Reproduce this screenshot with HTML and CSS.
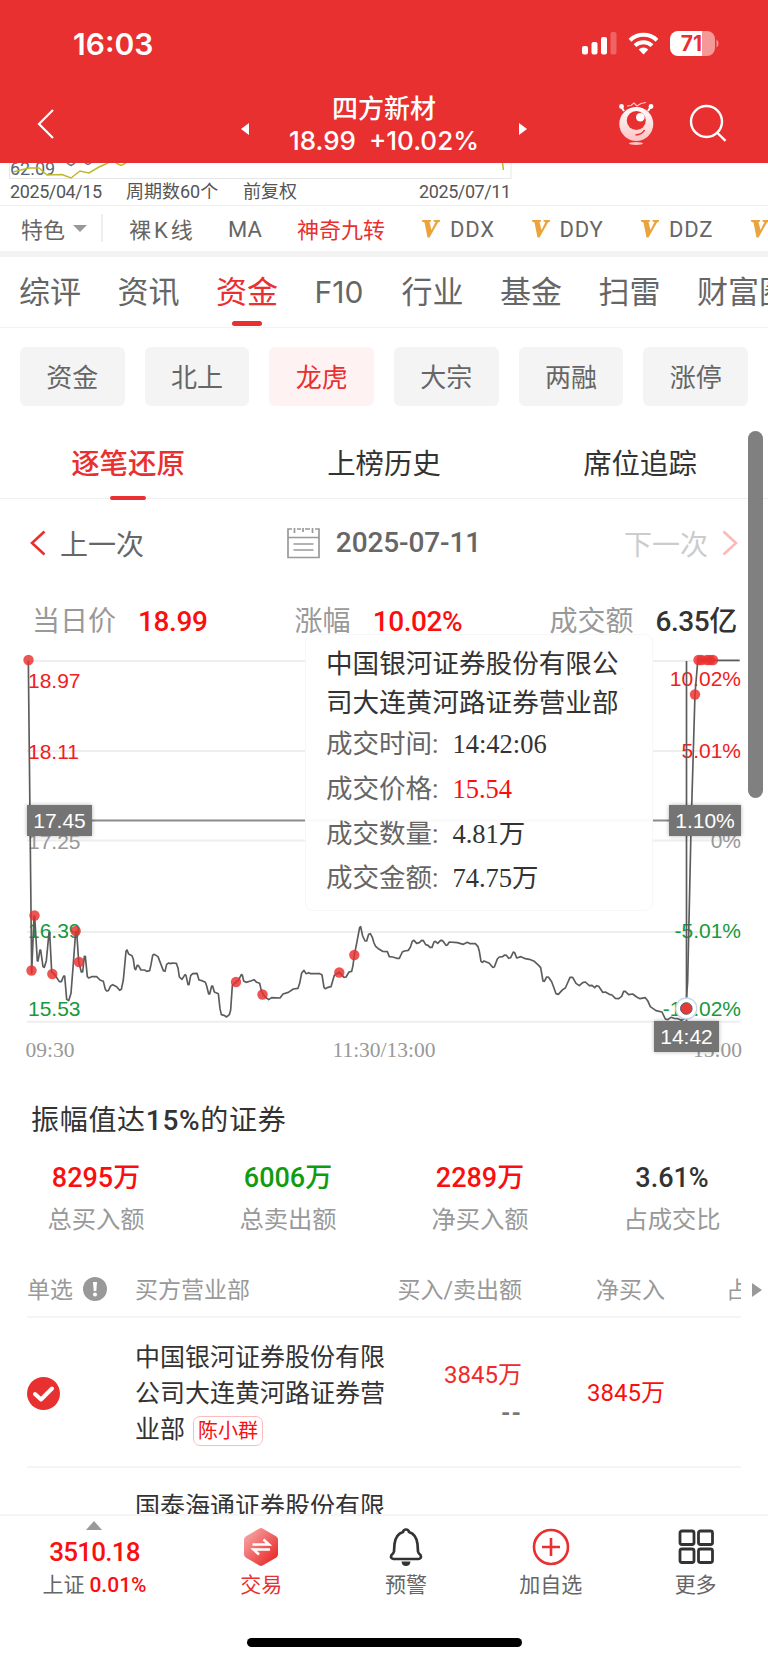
FILE: index.html
```html
<!DOCTYPE html>
<html lang="zh-CN">
<head>
    <meta charset="UTF-8">
    <meta name="viewport" content="width=device-width, initial-scale=1.0">
    <title>四方新材</title>
    <link rel="stylesheet" href="styles.css">
</head>
<body>
    <!-- Header -->
    <header class="header">
        <div class="status-bar">
            <span class="clock">16:03</span>
            <svg class="status-icons" width="140" height="28" viewBox="580 30 140 28">
                <g fill="#fff">
                    <rect x="582" y="46" width="6" height="8.500" rx="2"/>
                    <rect x="591.500" y="42" width="6" height="12.500" rx="2"/>
                    <rect x="601" y="37" width="6" height="17.500" rx="2"/>
                    <rect x="610.500" y="32" width="6" height="22.500" rx="2" opacity=".25"/>
                    <path d="M643.500 54.500l-4.800-5a7 7 0 0 1 9.600 0z"/>
                </g>
                <g fill="none" stroke="#fff" stroke-width="4">
                    <path d="M630 40.200a19.500 19.500 0 0 1 27 0"/>
                    <path d="M635 45.600a12.500 12.500 0 0 1 17 0"/>
                </g>
                <path d="M678 31h24v25h-24a8 8 0 0 1-8-8v-9a8 8 0 0 1 8-8z" fill="#fff"/>
                <path d="M702 31h5a8 8 0 0 1 8 8v9a8 8 0 0 1-8 8h-5z" fill="#fff" opacity=".5"/>
                <path d="M716.500 39.500a5 5 0 0 1 0 8z" fill="#fff" opacity=".5"/>
                <text class="battery-text" x="691.500" y="51">71</text>
            </svg>
        </div>
        <div class="title-bar">
            <svg class="back" width="20" height="32" viewBox="0 0 20 32"><path d="M17 2L3 16l14 14" fill="none" stroke="#fff" stroke-width="2.200"/></svg>
            <svg class="arrow" width="8" height="12" viewBox="0 0 8 12"><path d="M8 0v12L0 6z" fill="#fff"/></svg>
            <div class="stock">
                <div class="stock-name">四方新材</div>
                <div class="stock-price"><span>18.99</span><span>+10.02%</span></div>
            </div>
            <svg class="arrow" width="8" height="12" viewBox="0 0 8 12"><path d="M0 0v12l8-6z" fill="#fff"/></svg>
            <svg class="robot" width="36" height="46" viewBox="618 100 36 46">
                <defs>
                    <linearGradient id="robotFill" x1="0" y1="0" x2="0" y2="1"><stop offset="0" stop-color="#fff"/><stop offset="1" stop-color="#fcc3c3"/></linearGradient>
                </defs>
                <path d="M624 111l-2.500-4M648 111l2.500-4" stroke="#fff" stroke-width="2"/>
                <circle cx="621.500" cy="106.500" r="2.400" fill="#fff"/>
                <circle cx="651" cy="106.500" r="2.400" fill="#fff"/>
                <path d="M627 106l4-.500 3-2.500 3 3 4-2.500 5-1" fill="none" stroke="#ffc9c9" stroke-width="1.200"/>
                <circle cx="636.300" cy="124" r="17" fill="url(#robotFill)"/>
                <circle cx="636.300" cy="120.500" r="9.500" fill="#e93030"/>
                <circle cx="640.300" cy="117.300" r="4.300" fill="#fff"/>
                <path d="M635.500 135q7-.500 9-5" fill="none" stroke="#e93030" stroke-width="1.500"/>
                <ellipse cx="636" cy="143.500" rx="7" ry="1.500" fill="#ffc4c4"/>
            </svg>
            <svg class="search" width="40" height="40" viewBox="688 103 40 40" fill="none" stroke="#fff" stroke-width="2.400"><circle cx="706.500" cy="121.500" r="15.500"/><path d="M717 132.500l8.500 8.300"/></svg>
        </div>
    </header>

    <!-- K line remains and indicator bar -->
    <div class="kline">
        <svg class="kline-svg" width="768" height="16" viewBox="0 163 768 16">
            <path d="M9.500 163v15.500h501.500V163" fill="none" stroke="#e6e6e6"/>
            <text class="low-price" x="10" y="174.500">62.09</text>
            <path d="M13 172l16-4 10 0 8 7 15-.500 9 3.500 9-7 9 2 10-6 9-4M116 163l5 2.500 5-2.500M502.500 163l1 7" fill="none" stroke="#c0b92a" stroke-width="1.500"/>
            <path d="M67 163l4 2.500 4-2.500M85 163l3 1.500 3-1.500" fill="none" stroke="#6b7a8a" stroke-width="1.500"/>
        </svg>
        <div class="kline-dates">
            <span class="day">2025/04/15</span><span class="period">周期数60个</span><span>前复权</span><span class="day end-date">2025/07/11</span>
        </div>
    </div>
    <div class="indicators">
        <span class="feature">特色<i class="caret"></i></span>
        <span class="ind ind-k">裸 K 线</span>
        <span class="ind ind-ma">MA</span>
        <span class="ind ind-on">神奇九转</span>
        <span class="vip"><svg width="18" height="18" viewBox="0 0 18 18"><path d="M0 0h9v1.500l-1.500.500 2 8L13.500 2 11.500 1.500V0H18v1.500L16 2.500 7.500 17.500h-2L2.500 2.500 0 1.500z" fill="#eba43c"/></svg>DDX</span>
        <span class="vip"><svg width="18" height="18" viewBox="0 0 18 18"><path d="M0 0h9v1.500l-1.500.500 2 8L13.500 2 11.500 1.500V0H18v1.500L16 2.500 7.500 17.500h-2L2.500 2.500 0 1.500z" fill="#eba43c"/></svg>DDY</span>
        <span class="vip"><svg width="18" height="18" viewBox="0 0 18 18"><path d="M0 0h9v1.500l-1.500.500 2 8L13.500 2 11.500 1.500V0H18v1.500L16 2.500 7.500 17.500h-2L2.500 2.500 0 1.500z" fill="#eba43c"/></svg>DDZ</span>
        <span class="vip"><svg width="18" height="18" viewBox="0 0 18 18"><path d="M0 0h9v1.500l-1.500.500 2 8L13.500 2 11.500 1.500V0H18v1.500L16 2.500 7.500 17.500h-2L2.500 2.500 0 1.500z" fill="#eba43c"/></svg></span>
    </div>

    <!-- Tabs -->
    <nav class="main-tabs">
        <span>综评</span><span>资讯</span><span class="active">资金</span><span class="latin">F10</span><span>行业</span><span>基金</span><span>扫雷</span><span>财富圈</span>
    </nav>
    <div class="pills">
        <span>资金</span><span>北上</span><span class="active">龙虎</span><span>大宗</span><span>两融</span><span>涨停</span>
    </div>
    <div class="content">
        <div class="sub-tabs">
            <span class="active">逐笔还原</span><span>上榜历史</span><span>席位追踪</span>
        </div>

        <!-- Date switch -->
        <div class="date-row">
            <span class="prev"><svg width="16" height="26" viewBox="0 0 16 26"><path d="M14.500 1.500L2 13l12.500 11.500" fill="none" stroke="#e93030" stroke-width="2.600"/></svg>上一次</span>
            <span class="date">
                <svg width="33" height="32" viewBox="0 0 33 32" fill="none" stroke="#999" stroke-width="1.700"><path d="M5 2H1v28.500h31V2h-4M10 2h4M18 2h5M1 10.500h31M7.500 1v5M16 1v4M25.500 1v5M6.500 17h20M6.500 23h20"/></svg>
                2025-07-11
            </span>
            <span class="next">下一次<svg width="16" height="26" viewBox="0 0 16 26"><path d="M1.500 1.500L14 13 1.500 24.500" fill="none" stroke="#fbb9b9" stroke-width="2.600"/></svg></span>
        </div>
        <div class="quote-row">
            <span>当日价<b class="red">18.99</b></span>
            <span>涨幅<b class="red">10.02%</b></span>
            <span>成交额<b>6.35亿</b></span>
        </div>

        <!-- Chart -->
        <div class="chart">
            <svg width="768" height="430" viewBox="0 645 768 430">
                <g stroke="#eee" stroke-width="2">
                    <path d="M27 661h713M27 751h713M27 840.500h713M27 932h713M27 1021.700h713"/>
                </g>
                <g class="axis">
                    <text x="28" y="688" class="up">18.97</text>
                    <text x="28" y="759" class="up">18.11</text>
                    <text x="28" y="848.500">17.25</text>
                    <text x="28" y="938" class="down">16.39</text>
                    <text x="28" y="1015.500" class="down">15.53</text>
                </g>
                <g class="axis axis-right">
                    <text x="741" y="686" class="up">10.02%</text>
                    <text x="741" y="757.500" class="up">5.01%</text>
                    <text x="741" y="847.500">0%</text>
                    <text x="741" y="937.500" class="down">-5.01%</text>
                    <text x="741" y="1015.500" class="down">-10.02%</text>
                </g>
                <g class="time">
                    <text x="25.500" y="1056.500">09:30</text>
                    <text x="384" y="1056.500" text-anchor="middle">11:30/13:00</text>
                    <text x="742" y="1056.500" text-anchor="end">15:00</text>
                </g>
                <path d="M27 820.500h713" stroke="#8a8a8a" stroke-width="1.800"/>
                <g fill="none" stroke="#5c5c5c" stroke-width="5" stroke-linejoin="round">
                    <polyline transform="translate(0 630) scale(.33333)" points="85,92 95,1030 102,858 104,858 112,993 114,993 120,960 122,960 129,1010 133,1012 139,992 147,908 149,908 155,1025 165,1035 178,1055 184,1055 191,1038 194,1038 200,1108 206,1112 213,1090 220,1000 227,905 230,905 236,995 244,1026 248,1026 253,979 256,979 262,1040 266,1044 275,1040 290,1040 300,1050 310,1054 316,1078 320,1083 325,1082 332,1068 338,1064 350,1070 359,1081 364,1078 370,1050 378,964 381,960 386,972 396,977 400,988 404,1016 407,1019 411,1007 415,1006 423,1020 434,1020 440,1024 449,1022 453,1004 458,976 463,973 474,980 490,1022 495,1024 500,1003 506,999 512,1001 516,999 529,1000 534,1014 538,1041 546,1048 555,1034 558,1036 564,1064 567,1064 572,1037 578,1031 591,1030 597,1050 606,1052 616,1057 620,1068 626,1092 629,1092 635,1068 638,1068 643,1086 655,1091 660,1136 664,1154 672,1156 680,1161 688,1154 692,1140 697,1066 704,1060 716,1050 724,1034 727,1035 731,1053 738,1057 752,1053 762,1049 770,1057 779,1060 784,1082 792,1097 801,1105 806,1109 815,1103 840,1104 849,1092 865,1087 880,1077 894,1075 899,1060 905,1029 912,1021 918,1031 926,1028 932,1031 960,1031"/>
                    <polyline transform="translate(200 900) scale(.33333)" points="360,221 366,225 372,262 376,266 384,262 393,260 403,226 410,221 418,217 432,232 438,231 447,216 455,214 459,196 463,165 470,130 479,82 482,80 488,108 495,123 500,123 506,103 511,101 517,112 522,129 527,139 535,146 548,154 562,155 568,170 578,171 590,175 598,175 607,156 613,153 625,151 631,142 637,124 642,121 650,130 658,128 665,121 670,122 677,134 684,136 690,142 696,142 702,126 706,124 713,130 722,121 728,122 738,136 742,135 748,126 772,128 790,133 802,127 810,131 826,131 834,140 838,154 843,184 847,187 852,183 868,190 878,202 883,201 892,177 898,171 908,170 914,165 919,166 926,175 932,173 940,156 944,158 950,174 963,170 976,176 988,178 1003,184 1016,196 1022,203 1029,243 1033,244 1040,231 1045,231 1055,245 1062,264 1068,281 1075,283 1088,269 1096,264 1104,246 1110,232 1118,232 1128,250 1138,257 1148,248 1156,246 1168,257 1176,256 1184,263 1190,257 1196,259 1208,277 1216,276 1228,283 1236,285 1246,295 1256,296 1265,289 1271,274 1276,274 1286,284 1298,282 1310,291 1320,296 1336,293 1343,302 1351,320 1368,332 1386,336 1396,357 1403,359 1413,352 1422,355 1434,356 1444,361 1452,357 1457,330 1463,245 1473,-210 1485,-618 1493,-714 1497,-719 1619,-719"/>
                </g>
                <path d="M686.500 661v360" stroke="#5c5c5c" stroke-width="1.700"/>
                <g fill="#e93030" fill-opacity=".82">
                    <circle cx="28.500" cy="660" r="5.200"/><circle cx="34.500" cy="915.500" r="5.200"/><circle cx="31.500" cy="970.500" r="5.200"/>
                    <circle cx="52.300" cy="974" r="5.200"/><circle cx="75.700" cy="931" r="5.200"/><circle cx="79" cy="962" r="5.200"/>
                    <circle cx="236" cy="982" r="5.200"/><circle cx="262.500" cy="994.500" r="5.200"/><circle cx="339.300" cy="972.500" r="5.200"/>
                    <circle cx="354.300" cy="955" r="5.200"/><circle cx="695" cy="694.500" r="5.200"/><circle cx="698.500" cy="660" r="5.200"/>
                    <circle cx="701.500" cy="660" r="5.200"/><circle cx="707" cy="660" r="5.200"/><circle cx="710" cy="660" r="5.200"/><circle cx="713" cy="660" r="5.200"/>
                </g>
                <circle cx="686.300" cy="1008.500" r="10.500" fill="#fff" stroke="#c8d8ec" stroke-width="1.300"/>
                <circle cx="686.300" cy="1008.500" r="5.800" fill="#e43a3a" stroke="#5c5c5c"/>
            </svg>
            <span class="marker marker-price">17.45</span>
            <span class="marker marker-rate">1.10%</span>
            <span class="marker marker-time">14:42</span>
            <div class="tooltip">
                <div class="tooltip-title">中国银河证券股份有限公司大连黄河路证券营业部</div>
                <div class="tooltip-row">成交时间:<b>14:42:06</b></div>
                <div class="tooltip-row">成交价格:<b class="red">15.54</b></div>
                <div class="tooltip-row">成交数量:<b>4.81万</b></div>
                <div class="tooltip-row">成交金额:<b>74.75万</b></div>
            </div>
        </div>

        <!-- Summary -->
        <h3 class="reason">振幅值达<b>15%</b>的证券</h3>
        <div class="summary">
            <div><b class="red">8295万</b><span>总买入额</span></div>
            <div><b class="green">6006万</b><span>总卖出额</span></div>
            <div><b class="red">2289万</b><span>净买入额</span></div>
            <div><b>3.61%</b><span>占成交比</span></div>
        </div>

        <!-- Seats -->
        <div class="table">
            <div class="row row-head">
                <span class="pick">单选<svg width="24" height="24" viewBox="0 0 24 24"><circle cx="12" cy="12" r="12" fill="#999"/><path d="M10 5h4l-.7 9h-2.600z" fill="#fff"/><circle cx="12" cy="17.500" r="2" fill="#fff"/></svg></span>
                <span>买方营业部</span>
                <span class="num">买入/卖出额</span>
                <span class="num">净买入</span>
                <span class="cut">占</span>
                <i class="more-arrow"></i>
            </div>
            <div class="row row-seat">
                <span class="pick"><svg width="33" height="33" viewBox="0 0 33 33"><circle cx="16.500" cy="16.500" r="16.500" fill="#e93030"/><path d="M8 17l6 5.500L25 11.500" fill="none" stroke="#fff" stroke-width="4" stroke-linecap="round" stroke-linejoin="round"/></svg></span>
                <span class="seat">中国银河证券股份有限公司大连黄河路证券营业部<em class="tag">陈小群</em></span>
                <span class="num amount"><span>3845万</span><span class="dash">--</span></span>
                <span class="num net">3845万</span>
            </div>
            <div class="row row-next">
                <span class="pick"></span>
                <span class="seat">国泰海通证券股份有限</span>
            </div>
        </div>
        <div class="scrollbar"></div>
    </div>

    <!-- Bottom bar -->
    <footer class="footer">
        <div class="foot-items">
            <div class="foot-index">
                <i class="up-caret"></i>
                <b>3510.18</b>
                <span>上证<em>0.01%</em></span>
            </div>
            <div class="foot-item active">
                <svg width="38" height="40" viewBox="0 0 38 40">
                    <defs><linearGradient id="hex" x1="0" y1="0" x2="1" y2="1"><stop offset=".05" stop-color="#f8aaaa"/><stop offset=".85" stop-color="#e93030"/></linearGradient></defs>
                    <path d="M17 1.700q2-1.200 4 0l13 7.500q2 1.200 2 3.300v15q0 2.100-2 3.300l-13 7.500q-2 1.200-4 0L4 30.800q-2-1.200-2-3.300v-15q0-2.100 2-3.300z" fill="url(#hex)"/>
                    <path d="M10.500 17.500H27L21.500 12.500M28 22.500H11.500L17 27.500" stroke="#fff" stroke-width="2.500" fill="none"/>
                </svg>
                交易
            </div>
            <div class="foot-item">
                <svg width="36" height="40" viewBox="0 0 36 40">
                    <path d="M18 2.500q2.500 0 3 2.500 7.500 2.500 8.500 12l.5 7.500q.5 2 2.500 3.500 1.500 3.500-2 4H5.500Q2 31.500 3.500 28 5.500 26.500 6 24.500L6.500 17Q7.500 7.500 15 5q.5-2.500 3-2.500z" fill="none" stroke="#333" stroke-width="2.700"/>
                    <path d="M13.500 34.500h9q-.5 4.500-4.500 4.500t-4.500-4.500z" fill="#333"/>
                </svg>
                预警
            </div>
            <div class="foot-item">
                <svg width="38" height="40" viewBox="0 0 38 40" fill="none" stroke="#e93030" stroke-width="2.600"><circle cx="19" cy="20" r="17"/><path d="M10 20h18M19 11v18"/></svg>
                加自选
            </div>
            <div class="foot-item">
                <svg width="36" height="40" viewBox="0 0 36 40" fill="none" stroke="#333" stroke-width="2.800"><rect x="2" y="4" width="14" height="13.500" rx="2"/><rect x="20.500" y="4" width="14" height="13.500" rx="2"/><rect x="2" y="22" width="14" height="13.500" rx="2"/><rect x="20.500" y="22" width="14" height="13.500" rx="2"/></svg>
                更多
            </div>
        </div>
        <div class="home-bar"></div>
    </footer>
</body>
</html>
```

FILE: styles.css
```css
/* General Reset */
* {
    box-sizing: border-box;
}

body, html {
    margin: 0;
    padding: 0;
    width: 768px;
    height: 1662px;
    overflow: hidden;
    font-family: Roboto, 'Noto Sans CJK SC', sans-serif;
    background-color: #fff;
    color: #333;
}

body {
    display: flex;
    flex-direction: column;
}

svg {
    display: block;
    flex: none;
}

i, em {
    font-style: normal;
}

b {
    font-weight: 500;
}

.red {
    color: #fa0f0f;
}

.green {
    color: #109c10;
}

/* Header */
.header {
    height: 163px;
    flex: none;
    background: #e93030;
    color: #fff;
}

.status-bar {
    display: flex;
    justify-content: space-between;
    height: 88px;
    padding: 30px 48px 0 73px;
}

.clock {
    font-family: Inter, sans-serif;
    font-size: 30px;
    font-weight: 600;
    line-height: 28px;
}

.battery-text {
    font-family: Inter, sans-serif;
    font-size: 21px;
    font-weight: 700;
    text-anchor: middle;
    fill: #e93030;
}

.title-bar {
    display: flex;
    align-items: center;
    height: 75px;
    padding: 0 40px 0 36px;
}

.back {
    margin-top: -3px;
}

.title-bar .arrow {
    margin-left: 185px;
    margin-top: 7px;
}

.stock {
    width: 190px;
    margin-left: 40px;
    margin-top: -1px;
    text-align: center;
    font-size: 26px;
    line-height: 31px;
}

.stock-name {
    font-weight: 500;
}

.stock-price {
    display: flex;
    justify-content: space-between;
    font-family: Inter, sans-serif;
    font-size: 26px;
    font-weight: 500;
}

.stock + .arrow {
    margin-left: 40px;
}

.robot {
    margin-left: 91px;
    margin-top: -5px;
}

.search {
    margin-left: 34px;
    margin-top: -5px;
}

/* K line */
.kline {
    height: 43px;
    flex: none;
    border-bottom: 1px solid #eee;
}

.low-price {
    font-size: 18px;
    fill: #53677c;
}

.kline-dates {
    display: flex;
    height: 24px;
    padding: 0 257px 0 10px;
    line-height: 25px;
    font-size: 18px;
    color: #555;
}

.day {
    width: 92px;
    letter-spacing: -.4px;
    white-space: nowrap;
}

.period {
    width: 93px;
    margin: 0 24px;
    white-space: nowrap;
}

.end-date {
    margin-left: auto;
}

.indicators {
    display: flex;
    align-items: center;
    height: 51px;
    flex: none;
    padding-bottom: 1px;
    border-bottom: 6px solid #f3f3f3;
    font-size: 22px;
    color: #666;
    white-space: nowrap;
    overflow: hidden;
}

.feature {
    display: flex;
    align-items: center;
    width: 103px;
    height: 28px;
    flex: none;
    padding-left: 21px;
    border-right: 2px solid #eee;
}

.caret {
    margin-left: 8px;
    border: 7px solid transparent;
    border-top-color: #999;
    border-bottom: none;
}

.ind {
    flex: none;
}

.ind-k {
    width: 99px;
    padding-left: 26px;
    word-spacing: -2.500px;
}

.ind-ma {
    width: 95px;
    padding-top: 3px;
    padding-left: 26px;
}

.ind-on {
    width: 125px;
    color: #e93030;
}

.vip {
    display: flex;
    align-items: center;
    gap: 10px;
    width: 109.500px;
    flex: none;
    padding-top: 2px;
    letter-spacing: .8px;
}

/* Tabs */
.main-tabs {
    display: flex;
    gap: 36.500px;
    height: 71px;
    flex: none;
    padding-left: 19px;
    border-bottom: 1px solid #f2f2f2;
    font-size: 31px;
    line-height: 71px;
    color: #666;
    white-space: nowrap;
    overflow: hidden;
}

.main-tabs span {
    position: relative;
    flex: none;
}

.main-tabs .latin {
    width: 50.500px;
    font-family: Inter, sans-serif;
    font-size: 30px;
}

.main-tabs .active,
.sub-tabs .active {
    color: #e93030;
}

.main-tabs .active::after {
    content: "";
    position: absolute;
    left: 16px;
    bottom: 1px;
    width: 30px;
    height: 5px;
    border-radius: 3px;
    background: #e93030;
}

.pills {
    display: flex;
    gap: 20px;
    flex: none;
    padding: 19px 20px 0;
}

.pills span {
    flex: 1;
    height: 59px;
    border-radius: 6px;
    background: #f4f4f4;
    text-align: center;
    font-size: 26px;
    line-height: 62px;
    color: #666;
}

.pills .active {
    background: #fff2f2;
    color: #e93030;
}

.content {
    position: relative;
    flex: 1;
    min-height: 0;
    overflow: hidden;
}

.scrollbar {
    position: absolute;
    top: 25px;
    right: 5px;
    width: 15px;
    height: 367px;
    border-radius: 8px;
    background: #808080;
}

.sub-tabs {
    display: flex;
    height: 93px;
    padding-top: 22px;
    border-bottom: 1px solid #f0f0f0;
    font-size: 28.400px;
    line-height: 73px;
}

.sub-tabs span {
    position: relative;
    flex: 1;
    text-align: center;
}

.sub-tabs .active {
    font-weight: 500;
}

.sub-tabs .active::after {
    content: "";
    position: absolute;
    left: 110px;
    bottom: -2px;
    width: 36px;
    height: 4px;
    border-radius: 2px;
    background: #e93030;
}

/* Date switch */
.date-row {
    display: flex;
    justify-content: space-between;
    align-items: center;
    height: 90px;
    padding: 0 30px 3px;
    font-size: 28px;
    color: #666;
}

.date-row span {
    display: flex;
    align-items: center;
    gap: 14px;
}

.date-row .date {
    gap: 16px;
    margin-left: 0;
    font-weight: 500;
    letter-spacing: -.1px;
}

.date-row .next {
    color: #ccc;
}

.quote-row {
    display: flex;
    justify-content: space-between;
    height: 56px;
    padding: 0 31px 0 32px;
    font-size: 28px;
    line-height: 65px;
    color: #999;
}

.quote-row b {
    margin-left: 22px;
    letter-spacing: -.4px;
}

.quote-row b:not(.red) {
    color: #333;
}

/* Chart */
.chart {
    position: relative;
    height: 430px;
}

.axis text {
    font-family: 'Liberation Sans', Arial, sans-serif;
    font-size: 21px;
    fill: #999;
}

.axis-right text {
    text-anchor: end;
}

.axis .up {
    fill: #f02020;
}

.axis .down {
    fill: #159a3c;
}

.time text {
    font-family: 'Liberation Serif', 'Times New Roman', serif;
    font-size: 21.500px;
    fill: #999;
}

.marker {
    position: absolute;
    width: 65px;
    height: 31px;
    background: #747474;
    box-shadow: 0 0 4px rgba(0, 0, 0, 0.3);
    color: #fff;
    font-family: 'Liberation Sans', Arial, sans-serif;
    font-size: 21px;
    line-height: 32px;
    text-align: center;
}

.marker-price {
    left: 27px;
    top: 160px;
}

.marker-rate {
    left: 669px;
    top: 160px;
    width: 72px;
}

.marker-time {
    left: 654px;
    top: 376px;
}

.tooltip {
    position: absolute;
    left: 305px;
    top: -11px;
    width: 348px;
    height: 277px;
    padding: 9px 20px;
    border: 1px solid #f7f7f7;
    border-radius: 8px;
    background: rgba(255, 255, 255, 0.95);
}

.tooltip-title {
    width: 300px;
    font-size: 26.600px;
    line-height: 39px;
}

.tooltip-row {
    height: 44.800px;
    font-size: 26.500px;
    line-height: 44px;
    color: #666;
}

.tooltip-row b {
    margin-left: 14px;
    font-family: 'Liberation Serif', 'Noto Sans CJK SC', serif;
    font-weight: 400;
    color: #333;
}

.tooltip-row .red {
    color: #fa0f0f;
}

/* Summary */
.reason {
    margin: 0;
    padding-left: 31px;
    font-size: 28px;
    font-weight: 400;
    letter-spacing: .7px;
    line-height: 91px;
    height: 80px;
}

.summary {
    display: flex;
    height: 91px;
}

.summary div {
    width: 192px;
    text-align: center;
}

.summary b {
    display: block;
    font-size: 27px;
    line-height: 47px;
}

.summary span {
    display: block;
    font-size: 24.300px;
    line-height: 35px;
    color: #999;
}

/* Seats table */
.table {
    margin: 0 27px;
}

.row {
    display: grid;
    grid-template-columns: 108px 251px 136px 143px 76px;
    align-items: center;
    border-bottom: 2px solid #f5f5f5;
}

.row-head {
    position: relative;
    height: 72px;
    padding-top: 14px;
    font-size: 23px;
    color: #999;
}

.pick {
    display: flex;
    align-items: center;
    gap: 10px;
}

.row-head .pick svg {
    margin-top: 2px;
}

.num {
    text-align: right;
}

.cut {
    justify-self: end;
    width: 15px;
    overflow: hidden;
}

.more-arrow {
    position: absolute;
    right: -21px;
    top: 37px;
    border: 7px solid transparent;
    border-left: 10px solid #999;
    border-right: none;
}

.row-seat {
    height: 150px;
    padding-top: 3px;
}

.seat {
    font-size: 25px;
    line-height: 36px;
}

.tag {
    display: inline-block;
    margin-left: 8px;
    padding: 0 4px;
    height: 30px;
    border: 1px solid #fbb;
    border-radius: 7px;
    font-size: 20px;
    line-height: 28px;
    color: #fa0f0f;
    vertical-align: 0;
}

.amount {
    display: flex;
    flex-direction: column;
    font-size: 24px;
    line-height: 38px;
    color: #f02a2a;
}

.dash {
    color: #777;
    font-weight: 700;
    letter-spacing: 1px;
}

.net {
    padding-bottom: 6px;
    font-size: 24px;
    color: #fa0f0f;
}

.row-next {
    padding-top: 21px;
    border: none;
}

/* Bottom bar */
.footer {
    height: 148px;
    flex: none;
    border-top: 2px solid #f5f5f5;
    background: #fff;
}

.foot-items {
    display: flex;
    height: 122px;
}

.foot-index {
    display: flex;
    flex-direction: column;
    align-items: center;
    width: 189px;
    padding-top: 5px;
    font-size: 21px;
    color: #666;
}

.foot-index b {
    margin-top: 5px;
    font-size: 26px;
    font-weight: 500;
    letter-spacing: -.8px;
    line-height: 34px;
    color: #fa0f0f;
}

.foot-index span {
    line-height: 32px;
}

.foot-index em {
    margin-left: 5px;
    color: #fa0f0f;
    font-weight: 500;
}

.up-caret {
    border: 8px solid transparent;
    border-bottom: 9px solid #999;
    border-top: none;
}

.foot-item {
    display: flex;
    flex-direction: column;
    align-items: center;
    width: 144.800px;
    padding-top: 11px;
    font-size: 21px;
    line-height: 36px;
    color: #666;
}

.foot-item.active {
    color: #e93030;
}

.home-bar {
    width: 275px;
    height: 9px;
    margin: 0 auto;
    border-radius: 5px;
    background: #000;
}
```
